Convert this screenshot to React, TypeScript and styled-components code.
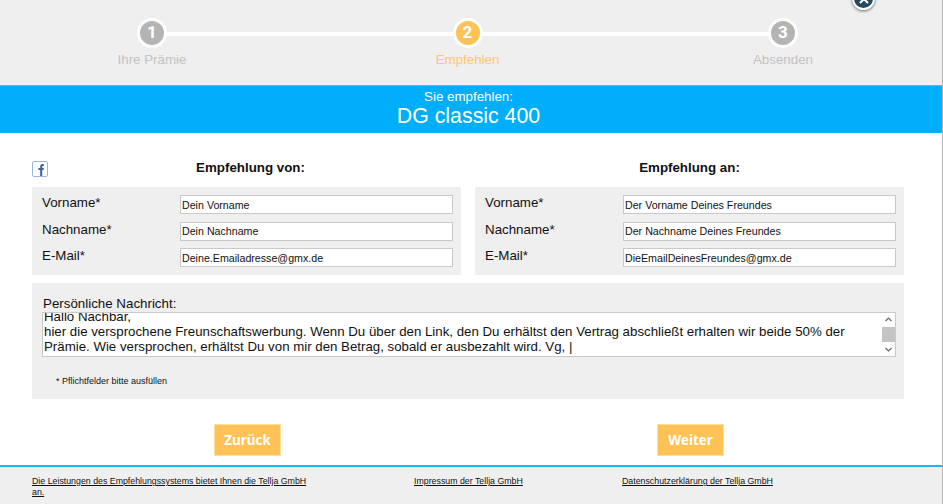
import React, { useLayoutEffect, useRef } from "react";
import styled, { createGlobalStyle } from "styled-components";

const Global = createGlobalStyle`
  html, body { margin: 0; padding: 0; background: #fff; }
  body { font-family: "Liberation Sans", Arial, sans-serif; color: #111; overflow: hidden; }
  * { box-sizing: border-box; }
`;

const Page = styled.div`
  position: relative;
  width: 943px;
  height: 504px;
  background: #fff;
  border-right: 1px solid #b5b5b5;
  display: flex;
  flex-direction: column;
  overflow: hidden;
`;

const Stepper = styled.div`
  height: 85px;
  background: #efefef;
  padding: 18px 7px 0 0;
  display: flex;
  justify-content: center;
`;

const Track = styled.ol`
  position: relative;
  margin: 0;
  padding: 0;
  list-style: none;
  width: 631px;
  height: 60px;
  display: flex;
  justify-content: space-between;
  &::before {
    content: "";
    position: absolute;
    left: 0;
    right: 0;
    top: 14px;
    height: 4px;
    background: #fff;
  }
`;

const Step = styled.li`
  position: relative;
  width: 0;
  display: flex;
  flex-direction: column;
  align-items: center;
`;

const Dot = styled.span<{ $active?: boolean }>`
  flex: none;
  width: 30px;
  height: 30px;
  border-radius: 50%;
  border: 3px solid #fff;
  background: ${(p) => (p.$active ? "#ffc256" : "#b4b4b4")};
  color: #fff;
  font-family: Roboto, "Liberation Sans", sans-serif;
  font-weight: 700;
  font-size: 17px;
  line-height: 23px;
  text-align: center;
`;

const StepLabel = styled.span<{ $active?: boolean }>`
  margin-top: 2px;
  font-size: 13.33px;
  line-height: 20px;
  white-space: nowrap;
  color: ${(p) => (p.$active ? "#ffc76a" : "#c3c3c3")};
`;

const Close = styled.button`
  position: absolute;
  left: 852px;
  top: -13px;
  width: 23px;
  height: 23px;
  padding: 0;
  border-radius: 50%;
  border: 2px solid #fff;
  background: #234a5d;
  box-shadow: 0 1px 3px rgba(0, 0, 0, 0.55);
  display: flex;
  align-items: center;
  justify-content: center;
`;

const Banner = styled.div`
  height: 48px;
  background: #00aefa;
  border-top: 1px solid #3dc1fb;
  color: #fff;
  text-align: center;
  padding: 2px 5px 0 0;
`;

const BannerSmall = styled.div`
  font-size: 13.33px;
  line-height: 17px;
`;

const BannerTitle = styled.div`
  font-size: 21.33px;
  line-height: 22px;
`;

const Main = styled.main`
  padding: 24px 38px 0 32px;
  flex: 1;
`;

const Columns = styled.div`
  display: grid;
  grid-template-columns: 429px 429px;
  column-gap: 14px;
`;

const ColumnHead = styled.div`
  height: 30px;
  display: flex;
  align-items: flex-start;
`;

const Fb = styled.a`
  flex: none;
  width: 16px;
  height: 16px;
  display: block;
  margin-top: 4px;
`;

const Heading = styled.h2<{ $offset?: boolean }>`
  flex: 1;
  margin: 0;
  font-size: 13.33px;
  font-weight: 700;
  text-align: center;
  padding-right: ${(p) => (p.$offset ? "8px" : "0")};
  line-height: 22px;
`;

const Panel = styled.div`
  background: #efefef;
`;

const Fields = styled(Panel)`
  height: 88px;
  padding: 8px 8px 0 10px;
  display: flex;
  flex-direction: column;
  gap: 7.5px;
`;

const Field = styled.label`
  display: grid;
  grid-template-columns: 138px 273px;
  align-items: center;
  height: 19px;
  font-size: 13.33px;
`;

const FieldName = styled.span`
  position: relative;
  top: -2px;
`;

const Input = styled.input`
  width: 273px;
  height: 19px;
  padding: 0 0 0 1px;
  border: 1px solid #c9c9c9;
  background: #fff;
  color: #111;
  font-family: "Liberation Sans", Arial, sans-serif;
  font-size: 10.67px;
  outline: none;
  border-radius: 0;
`;

const MessagePanel = styled(Panel)`
  margin-top: 8px;
  height: 116px;
  padding: 12px 8px 0 11px;
`;

const MessageLabel = styled.label`
  display: block;
  font-size: 13.33px;
  line-height: 17px;
`;

const MessageWrap = styled.div`
  position: relative;
  width: 854px;
  height: 45px;
  margin-left: -1px;
`;

const Message = styled.textarea`
  display: block;
  width: 100%;
  height: 100%;
  padding: 1px 20px 12px 1px;
  margin: 0;
  border: 1px solid #c9c9c9;
  background: #fff;
  color: #111;
  font-family: "Liberation Sans", Arial, sans-serif;
  font-size: 13.27px;
  line-height: 15px;
  resize: none;
  overflow: hidden;
  outline: none;
  border-radius: 0;
`;

const Scrollbar = styled.div`
  position: absolute;
  top: 1px;
  right: 1px;
  bottom: 1px;
  width: 13px;
  padding: 2px 0;
  display: flex;
  flex-direction: column;
  align-items: center;
  justify-content: space-between;
  background: #fff;
`;

const Thumb = styled.div`
  width: 13px;
  height: 15px;
  background: #c4c4c4;
`;

const Hint = styled.p`
  margin: 18px 0 0 13px;
  font-size: 9px;
  line-height: 12px;
`;

const Actions = styled.div`
  display: grid;
  grid-template-columns: 429px 429px;
  column-gap: 14px;
  margin-top: 25px;
`;

const ActionCell = styled.div<{ $shift: number }>`
  display: flex;
  padding-left: ${(p) => p.$shift}px;
`;

const Button = styled.button`
  height: 32px;
  width: 67px;
  padding: 0;
  border: 1px solid #ffdf9e;
  background: #ffc256;
  color: #fff;
  font-family: "Open Sans", "Liberation Sans", sans-serif;
  font-size: 13.33px;
  font-weight: 700;
`;

const Footer = styled.footer`
  height: 39px;
  background: #efefef;
  border-top: 2px solid #1eb6f3;
  padding: 9px 0 0 32px;
  display: grid;
  grid-template-columns: 382px 208px 200px;
  font-size: 8.8px;
  line-height: 11px;
`;

const FooterLink = styled.a`
  color: #111;
  text-decoration: underline;
  width: 280px;
  display: block;
`;

const Chevron = ({ up }: { up?: boolean }) => (
  <svg width="9" height="9" viewBox="0 0 9 9" fill="none" stroke="#666" strokeWidth="1.2">
    <path d={up ? "M1.5 6 L4.5 3 L7.5 6" : "M1.5 3 L4.5 6 L7.5 3"} />
  </svg>
);

const text =
  "Hallo Nachbar,\nhier die versprochene Freunschaftswerbung. Wenn Du über den Link, den Du erhältst den Vertrag abschließt erhalten wir beide 50% der Prämie. Wie versprochen, erhältst Du von mir den Betrag, sobald er ausbezahlt wird. Vg, |";

const from = [
  ["Vorname*", "Dein Vorname"],
  ["Nachname*", "Dein Nachname"],
  ["E-Mail*", "Deine.Emailadresse@gmx.de"],
];
const to = [
  ["Vorname*", "Der Vorname Deines Freundes"],
  ["Nachname*", "Der Nachname Deines Freundes"],
  ["E-Mail*", "DieEmailDeinesFreundes@gmx.de"],
];

const FieldGroup = ({ rows }: { rows: string[][] }) => (
  <Fields>
    {rows.map(([l, v]) => (
      <Field key={l}>
        <FieldName>{l}</FieldName>
        <Input defaultValue={v} />
      </Field>
    ))}
  </Fields>
);

export default function App() {
  const ref = useRef<HTMLTextAreaElement>(null);
  useLayoutEffect(() => {
    if (ref.current) ref.current.scrollTop = 5;
  }, []);
  return (
    <Page>
      <Global />
      <Stepper>
        <Track>
          <Step>
            <Dot>1</Dot>
            <StepLabel>Ihre Prämie</StepLabel>
          </Step>
          <Step>
            <Dot $active>2</Dot>
            <StepLabel $active>Empfehlen</StepLabel>
          </Step>
          <Step>
            <Dot>3</Dot>
            <StepLabel>Absenden</StepLabel>
          </Step>
        </Track>
      </Stepper>
      <Close aria-label="Schließen">
        <svg width="12" height="12" viewBox="0 0 12 12" stroke="#fff" strokeWidth="2" fill="none">
          <path d="M2 2 L10 10 M10 2 L2 10" />
        </svg>
      </Close>
      <Banner>
        <BannerSmall>Sie empfehlen:</BannerSmall>
        <BannerTitle>DG classic 400</BannerTitle>
      </Banner>
      <Main>
        <Columns>
          <div>
            <ColumnHead>
              <Fb>
                <svg width="16" height="16" viewBox="0 0 16 16">
                  <rect x="0.5" y="0.5" width="15" height="15" rx="1.5" fill="#fff" stroke="#9db4d8" />
                  <path
                    d="M8.2 15 V9 H6.4 V7 H8.2 V5.4 C8.2 3.7 9.2 3 10.6 3 H11.8 V5 H10.9 C10.3 5 10.2 5.3 10.2 5.8 V7 H11.8 L11.5 9 H10.2 V15 Z"
                    fill="#3b5fa3"
                  />
                </svg>
              </Fb>
              <Heading $offset>Empfehlung von:</Heading>
            </ColumnHead>
            <FieldGroup rows={from} />
          </div>
          <div>
            <ColumnHead>
              <Heading>Empfehlung an:</Heading>
            </ColumnHead>
            <FieldGroup rows={to} />
          </div>
        </Columns>
        <MessagePanel>
          <MessageLabel>Persönliche Nachricht:</MessageLabel>
          <MessageWrap>
            <Message ref={ref} defaultValue={text} />
            <Scrollbar>
              <Chevron up />
              <Thumb />
              <Chevron />
            </Scrollbar>
          </MessageWrap>
          <Hint>* Pflichtfelder bitte ausfüllen</Hint>
        </MessagePanel>
        <Actions>
          <ActionCell $shift={182}>
            <Button>Zurück</Button>
          </ActionCell>
          <ActionCell $shift={182}>
            <Button>Weiter</Button>
          </ActionCell>
        </Actions>
      </Main>
      <Footer>
        <FooterLink href="#">Die Leistungen des Empfehlungssystems bietet Ihnen die Tellja GmbH an.</FooterLink>
        <FooterLink href="#">Impressum der Tellja GmbH</FooterLink>
        <FooterLink href="#">Datenschutzerklärung der Tellja GmbH</FooterLink>
      </Footer>
    </Page>
  );
}
